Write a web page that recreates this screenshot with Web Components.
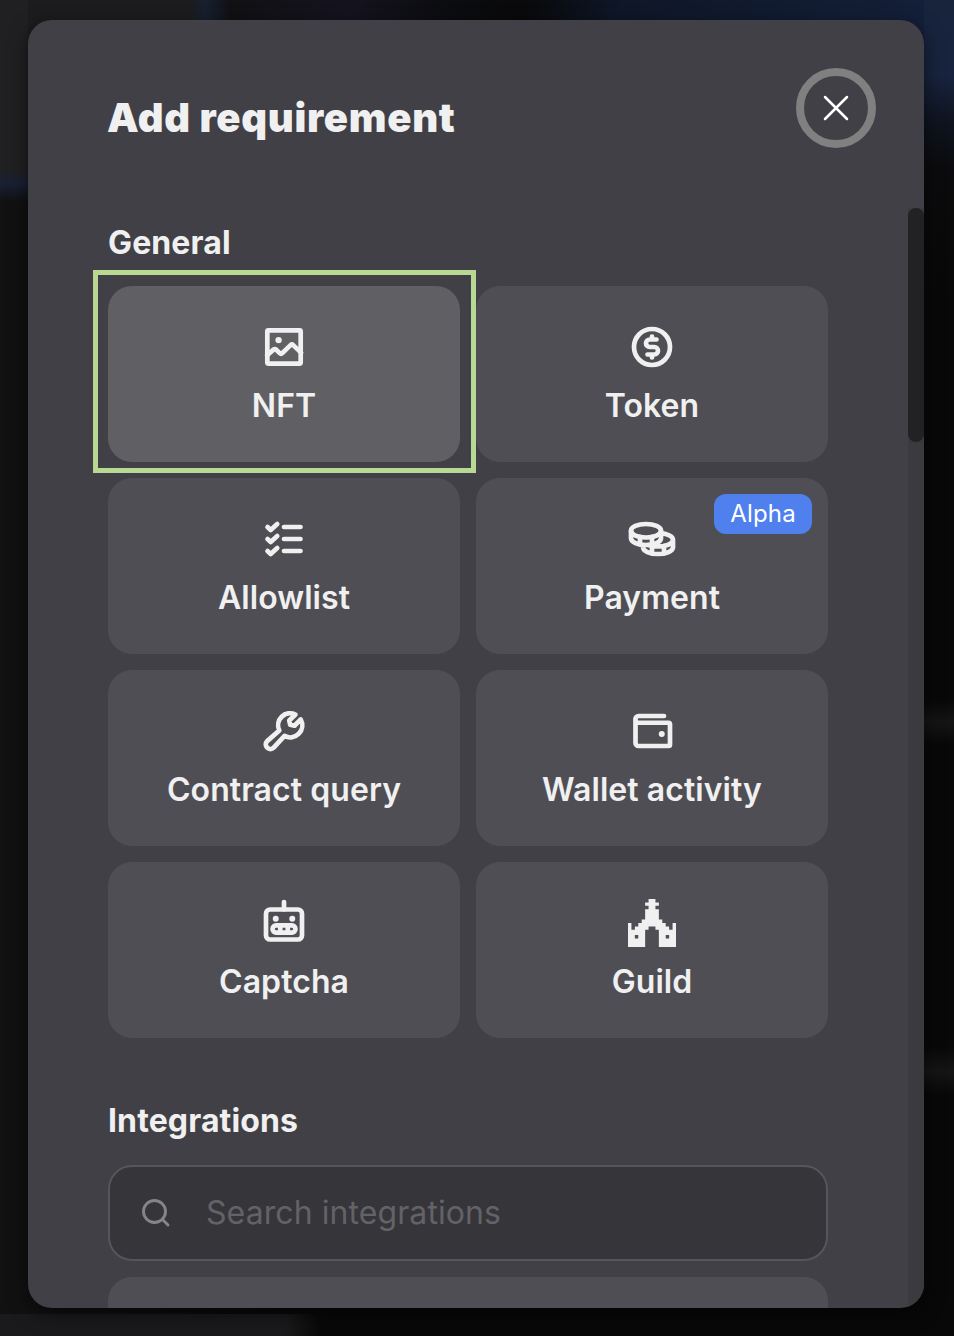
<!DOCTYPE html>
<html lang="en">
<head>
<meta charset="utf-8">
<title>Add requirement</title>
<style>
html,body{margin:0;height:100%}
body{height:1336px;overflow:hidden;background:#0b0b0b;font-family:Inter,"Liberation Sans",sans-serif;color:#f0f0f0}
</style>
</head>
<body>
<page-backdrop>
  <modal-dialog>
    <span slot="title">Add requirement</span>
    <requirement-section heading="General">
      <card-grid>
        <requirement-card icon="image" label="NFT" selected></requirement-card>
        <requirement-card icon="dollar" label="Token"></requirement-card>
        <requirement-card icon="list" label="Allowlist"></requirement-card>
        <requirement-card icon="coins" label="Payment"><alpha-badge slot="badge">Alpha</alpha-badge></requirement-card>
        <requirement-card icon="wrench" label="Contract query"></requirement-card>
        <requirement-card icon="wallet" label="Wallet activity"></requirement-card>
        <requirement-card icon="robot" label="Captcha"></requirement-card>
        <requirement-card icon="guild" label="Guild"></requirement-card>
      </card-grid>
    </requirement-section>
    <requirement-section heading="Integrations">
      <search-field>Search integrations</search-field>
      <integration-row></integration-row>
    </requirement-section>
  </modal-dialog>
</page-backdrop>
<script>
const define = (name, html) => customElements.define(name, class extends HTMLElement {
  constructor() {
    super();
    this.attachShadow({mode: 'open'}).innerHTML = typeof html === 'function' ? html(this) : html;
  }
});

const ICONS = {
  image: '<rect x="39" y="39" width="178" height="178" rx="6"/><path d="M38 172L72 142Q79 136 86 142L105 161Q112 168 119 161L163 118Q170 111 177 118L219 158"/><circle class="dot" cx="99" cy="91" r="17"/>',
  dollar: '<circle cx="128" cy="128" r="96"/><path d="M128 72v16M128 168v16M104 168h36a20 20 0 0 0 0-40h-24a20 20 0 0 1 0-40h36"/>',
  list: '<path d="M128 64h88M128 128h88M128 192h88M92 48L57 80 40 64M92 112L57 144 40 128M92 176L57 208 40 192"/>',
  coins: '<ellipse cx="96" cy="84" rx="80" ry="36"/><path d="M16 84v40c0 19.9 35.8 36 80 36s80-16.1 80-36V84M64 117v40M128 117v85M176 97c36.500 3.400 64 18 64 35 0 20-36 36-80 36-20 0-38-3-52-8M80 159v13c0 20 36 36 80 36s80-16 80-36v-40M192 165v40"/>',
  wrench: '<path d="M217 66A64 64 0 0 1 131 154L73 217A24 24 0 0 1 38 182L103 125A64 64 0 0 1 189 40L156 72L161 95L184 100Z"/>',
  wallet: '<path d="M40 64V192a16 16 0 0 0 16 16H216a8 8 0 0 0 8-8V92a8 8 0 0 0-8-8H56A16 18 0 0 1 40 64 16 16 0 0 1 56 48H192"/><circle class="dot" cx="180" cy="144" r="16"/>',
  robot: '<rect x="32" y="56" width="192" height="160" rx="22"/><rect x="67" y="141" width="122" height="38" rx="19"/><path d="M108 141v38M148 141v38M128 16v40"/><circle class="dot" cx="84" cy="105" r="16"/><circle class="dot" cx="172" cy="105" r="16"/>',
  guild: '<path class="dot" fill-rule="evenodd" transform="scale(18.2857)" d="M6 0H8V1H9V2H8V3H9V6H10V7H11V8H12V9H13V7H14V14H9V9H8V8H6V9H5V14H0V7H1V9H2V8H3V7H4V6H5V3H6V2H5V1H6ZM2 10.500V11.500H3V10.500ZM11 10.500V11.500H12V10.500Z"/>'
};

define('page-backdrop', `<style>
:host{display:block;box-sizing:border-box;height:1336px;padding:20px 30px 28px 28px;
background:
 linear-gradient(#18233c,#18243f 75px,#0f1420 120px,#0b0b0d 170px,transparent 300px) 100% 0/30px 310px no-repeat,
 linear-gradient(90deg,transparent 520px,#0f1728 620px,#14203a 954px) 0 0/100% 60px no-repeat,
 linear-gradient(#202022 170px,#1a2034 184px,transparent 202px) 0 0/28px 210px no-repeat,
 linear-gradient(90deg,#1c1c1e 190px,#17202f 206px,#111114 230px,#15131f 350px,#0c0d11 440px,transparent 550px) 0 0/100% 60px no-repeat,
 linear-gradient(90deg,#1a1a1c 285px,transparent 320px) 0 1314px/100% 22px no-repeat,
 linear-gradient(transparent 700px,#151516 722px,#080808 745px,#080808 1045px,#151516 1072px,transparent 1095px) 100% 0/30px 100% no-repeat,
 linear-gradient(90deg,#111 28px,#080808 340px)}
</style><slot></slot>`);

define('modal-dialog', `<style>
:host{display:flex;flex-direction:column;height:1288px;border-radius:24px;background:#414046;overflow:hidden;box-shadow:0 6px 20px #0008}
header{flex:none;box-sizing:border-box;height:188px;padding:48px 48px 0 80px;display:flex;justify-content:space-between;align-items:flex-start}
h1{margin:24px 0 0 -1px;font-size:40px;line-height:52px;font-weight:900;letter-spacing:.7px;white-space:nowrap}
button{box-sizing:border-box;width:80px;height:80px;border:8px solid #808081;border-radius:50%;background:none;padding:0;display:grid;place-items:center}
svg{width:26px;height:26px;fill:none;stroke:#fff;stroke-width:2.500;stroke-linecap:round}
.body{flex:1;min-height:0;display:flex;justify-content:space-between}
main{width:720px;padding:0 0 0 80px;height:1100px;overflow:hidden}
.track{width:16px;background:#3b3a3f}
.thumb{height:234px;border-radius:8px;background:#222224}
</style>
<header><h1><slot name="title"></slot></h1><button aria-label="Close"><svg viewBox="0 0 26 26"><path d="M2 2L24 24M24 2L2 24"/></svg></button></header>
<div class="body"><main><slot></slot></main><div class="track"><div class="thumb"></div></div></div>`);

define('requirement-section', el => `<style>
:host{display:block;padding-top:15px}
:host(:nth-of-type(2)){padding-top:63px}
h2{margin:0 0 23px;font-size:32px;line-height:40px;font-weight:700;letter-spacing:.12px}
:host(:nth-of-type(2)) h2{margin-bottom:24px}
</style><h2>${el.getAttribute('heading')}</h2><slot></slot>`);

define('card-grid', `<style>:host{display:grid;grid-template-columns:352px 352px;gap:16px}</style><slot></slot>`);

define('requirement-card', el => `<style>
:host{display:flex;box-sizing:border-box;height:176px;padding-top:37px;flex-direction:column;align-items:center;gap:15px;position:relative;border-radius:24px;background:#4f4e54}
:host([selected]){background:#605f64;z-index:1}
:host([selected])::after{content:"";position:absolute;inset:-16px -16px -11px -15px;border:5px solid #b9d993}
svg{flex:none;width:48px;height:48px;fill:none;stroke:currentColor;stroke-width:25;stroke-linecap:round;stroke-linejoin:round}
.dot{fill:currentColor;stroke:none}
span{font-size:32px;line-height:40px;font-weight:600;letter-spacing:.06px;white-space:nowrap}
.badge{position:absolute;top:16px;right:16px}
</style><svg viewBox="0 0 256 256" aria-hidden="true">${ICONS[el.getAttribute('icon')]}</svg><span>${el.getAttribute('label')}</span><div class="badge"><slot name="badge"></slot></div>`);

define('alpha-badge', `<style>:host{display:block;box-sizing:border-box;width:98px;height:40px;border-radius:12px;background:#4f80ee;color:#fff;font-size:24px;line-height:40px;font-weight:400;letter-spacing:.2px;text-align:center}</style><slot></slot>`);

define('search-field', `<style>
:host{display:flex;align-items:center;box-sizing:border-box;height:96px;border:2px solid #56555a;border-radius:24px;background:#36353a;padding-left:30px;gap:34px;color:#636267;font-size:32px;line-height:40px;letter-spacing:.08px}
svg{width:32px;height:32px;fill:none;stroke:#858585;stroke-width:2.900;stroke-linecap:round}
</style><svg viewBox="0 0 32 32"><circle cx="14.500" cy="14.500" r="11"/><path d="M22.500 22.500L28 28"/></svg><span><slot></slot></span>`);

define('integration-row', `<style>:host{display:block;height:176px;margin-top:16px;border-radius:24px;background:#4f4e54}</style>`);
</script>
</body>
</html>
